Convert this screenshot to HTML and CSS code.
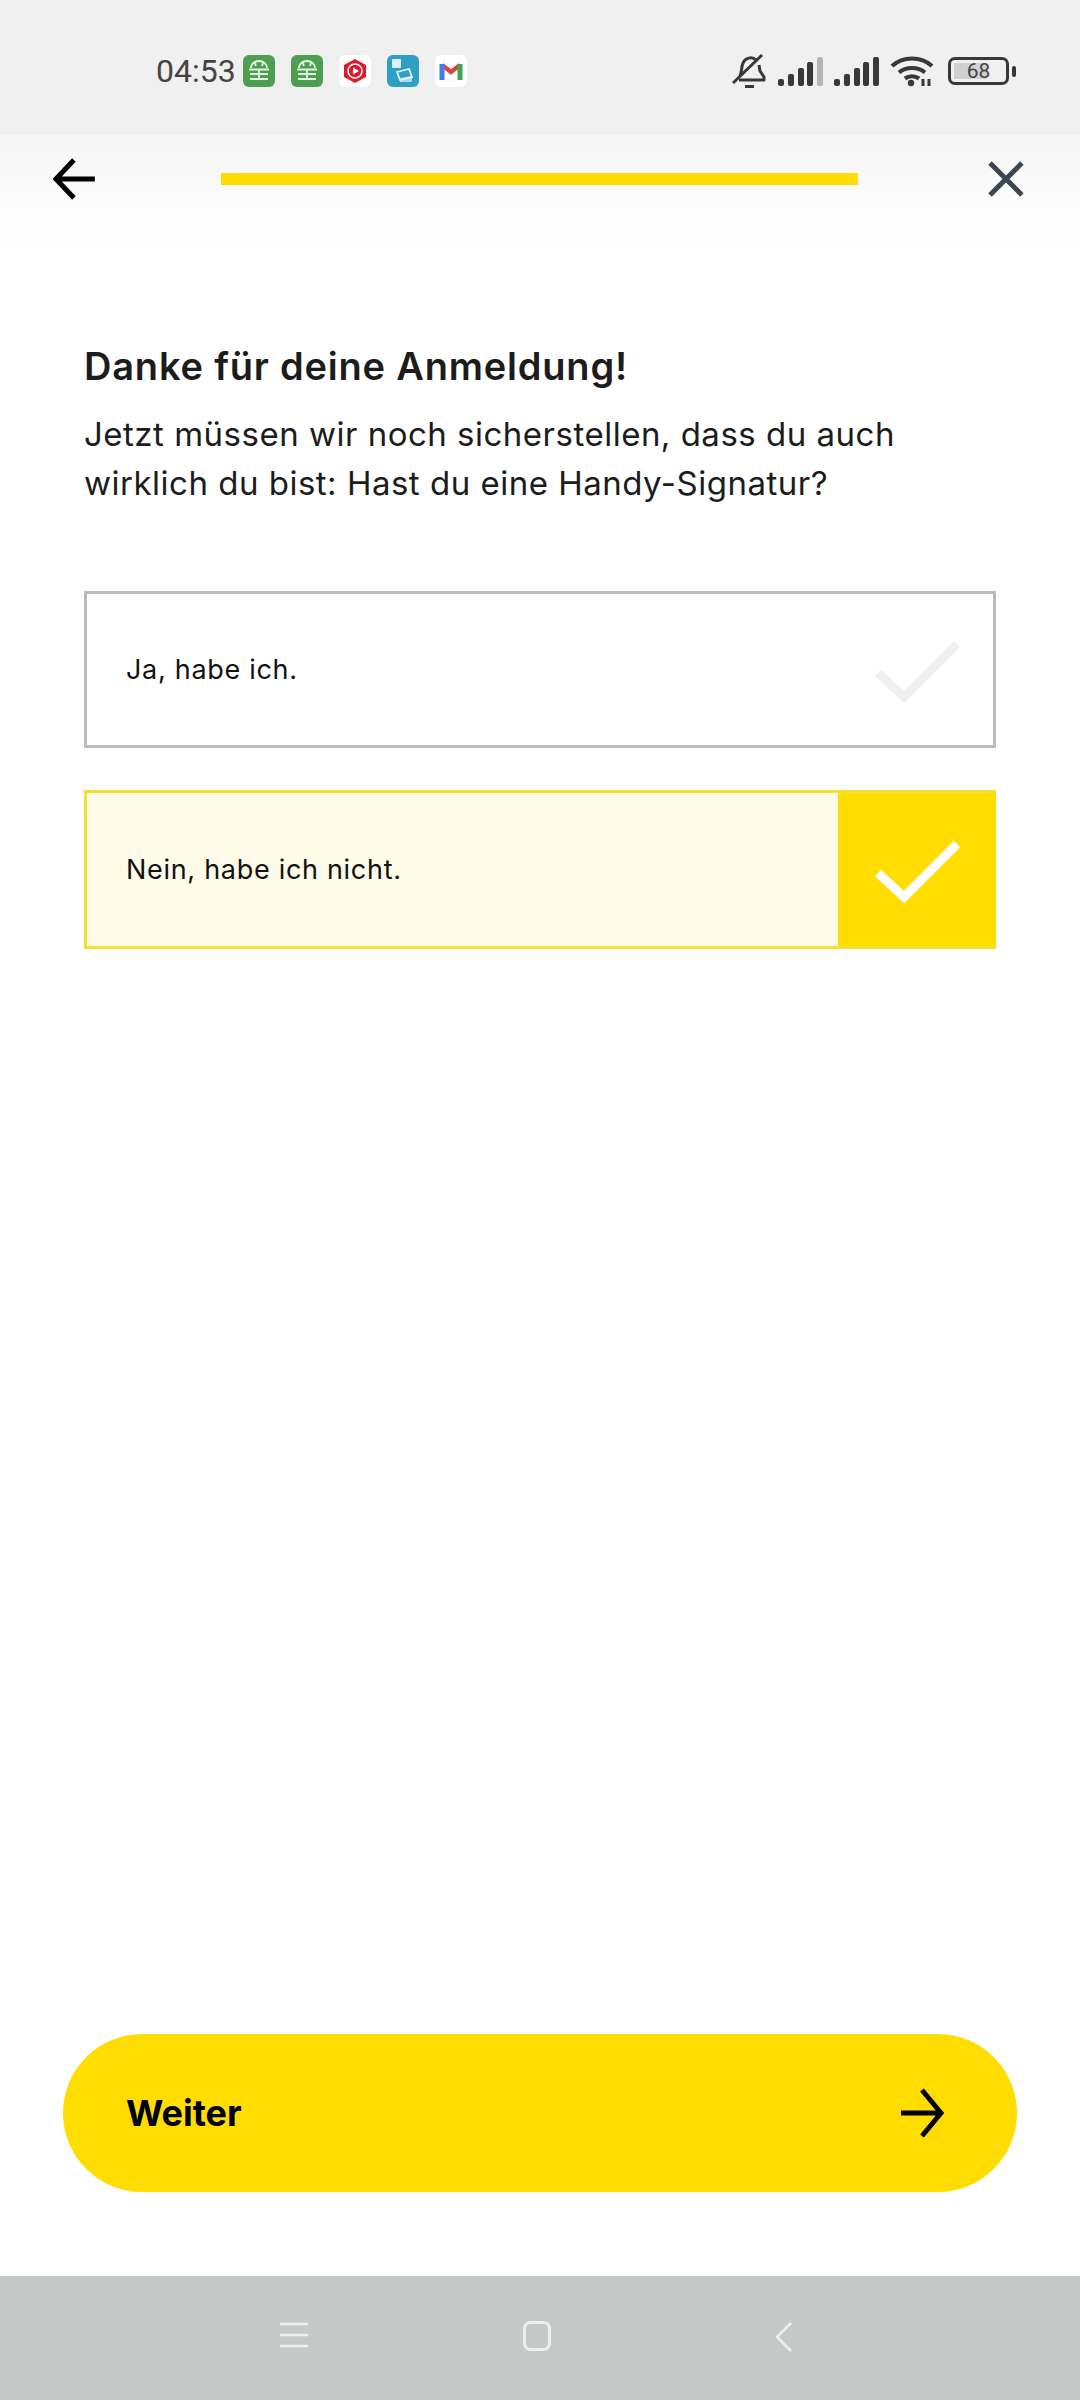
FILE: index.html
```html
<!DOCTYPE html>
<html lang="de">
<head>
    <meta charset="UTF-8">
    <meta name="viewport" content="width=device-width, initial-scale=1.0">
    <title>Anmeldung</title>
    <link rel="stylesheet" href="styles.css">
</head>
<body>
    <div class="statusbar">
        <span class="time">04:53</span>
        <div class="app-icons">
            <svg class="app" viewBox="0 0 32 32"><rect width="32" height="32" rx="6" fill="#4c9f50"/><path d="M8 13a8 7 0 0 1 16 0M6 14.500h20M7 19h18M7 24h18M16 15v9M12 8l1 3M20 8l-1 3" fill="none" stroke="#e4f2e4" stroke-width="1.800"/></svg>
            <svg class="app" viewBox="0 0 32 32"><rect width="32" height="32" rx="6" fill="#4c9f50"/><path d="M8 13a8 7 0 0 1 16 0M6 14.500h20M7 19h18M7 24h18M16 15v9M12 8l1 3M20 8l-1 3" fill="none" stroke="#e4f2e4" stroke-width="1.800"/></svg>
            <svg class="app" viewBox="0 0 32 32"><rect width="32" height="32" rx="6" fill="#fff"/><path d="M16 4l11 6v12l-11 6-11-6V10z" fill="#dd1a2a"/><circle cx="16" cy="16" r="7" fill="none" stroke="#fff" stroke-width="1.500"/><path d="M14 12.500l6 3.500-6 3.500z" fill="#fff"/></svg>
            <svg class="app" viewBox="0 0 32 32"><rect width="32" height="32" rx="6" fill="#2f9fc4"/><rect x="5" y="4" width="9" height="9" rx="1" fill="#d9f0f7"/><path d="M10 17l12-3 3 8-12 3z" fill="none" stroke="#e4f4f9" stroke-width="1.800"/><path d="M13 23l12-2v6H13z" fill="#e4f4f9" opacity=".7"/></svg>
            <svg class="app" viewBox="0 0 32 32"><rect width="32" height="32" rx="6" fill="#fff"/><path d="M7 10l9 7 9-7" fill="none" stroke="#dd4438" stroke-width="4.500"/><path d="M7 25V9" stroke="#3f7fe0" stroke-width="5"/><path d="M25 25V9" stroke="#3fa457" stroke-width="5"/></svg>
        </div>
        <div class="sys-icons">
            <svg class="bell" viewBox="0 0 34 36"><path d="M8 23c2-4 1-8 3-13 2-5 9-7 13-3M27 12l1 6 4 6v3H7" fill="none" stroke="#383838" stroke-width="3" stroke-linejoin="round"/><path d="M1 30L30 2" stroke="#383838" stroke-width="3"/><path d="M13 33.500h9" stroke="#383838" stroke-width="3"/></svg>
            <svg class="signal" viewBox="0 0 45 29"><rect x="0" y="22" width="6" height="7" rx="2" fill="#383838"/><rect x="10" y="17" width="6" height="12" rx="2" fill="#383838"/><rect x="20" y="11" width="6" height="18" rx="2" fill="#383838"/><rect x="29" y="5" width="6" height="24" rx="2" fill="#383838"/><rect x="39" y="0" width="6" height="29" rx="2" fill="#b5b5b5"/></svg>
            <svg class="signal" viewBox="0 0 45 29"><rect x="0" y="22" width="6" height="7" rx="2" fill="#383838"/><rect x="10" y="17" width="6" height="12" rx="2" fill="#383838"/><rect x="20" y="11" width="6" height="18" rx="2" fill="#383838"/><rect x="29" y="5" width="6" height="24" rx="2" fill="#383838"/><rect x="39" y="0" width="6" height="29" rx="2" fill="#383838"/></svg>
            <svg class="wifi" viewBox="0 0 44 32"><path d="M2 11c11-10 29-10 40 0M9 17.500c7-6 19-6 26 0M15 23.500c4-3 10-3 14 0" fill="none" stroke="#383838" stroke-width="4.200"/><circle cx="21" cy="28" r="3.200" fill="#383838"/><path d="M33 24v7M39 24v7" stroke="#383838" stroke-width="3"/></svg>
            <div class="battery">
                <div class="battery-body"><div class="battery-fill"></div><span class="battery-text">68</span></div>
                <div class="battery-nub"></div>
            </div>
        </div>
    </div>

    <div class="topbar">
        <svg class="back" viewBox="0 0 44 44"><path d="M42 22H4M21 3L3 22l18 19" fill="none" stroke="#000" stroke-width="5"/></svg>
        <div class="progress"></div>
        <svg class="close" viewBox="0 0 38 38"><path d="M3 3l32 32M35 3L3 35" fill="none" stroke="#3c4650" stroke-width="5"/></svg>
    </div>

    <div class="content">
        <h1>Danke für deine Anmeldung!</h1>
        <p class="intro">Jetzt müssen wir noch sicherstellen, dass du auch<br>wirklich du bist: Hast du eine Handy-Signatur?</p>

        <div class="option">
            <span>Ja, habe ich.</span>
            <div class="option-check">
                <svg viewBox="0 0 90 66"><path d="M5 36l26 24L84 7" fill="none" stroke="#f0f0f1" stroke-width="9"/></svg>
            </div>
        </div>
        <div class="option selected">
            <span>Nein, habe ich nicht.</span>
            <div class="option-check">
                <svg viewBox="0 0 90 66"><path d="M5 36l26 24L84 7" fill="none" stroke="#fff" stroke-width="9"/></svg>
            </div>
        </div>
    </div>

    <button class="next">
        <span>Weiter</span>
        <svg viewBox="0 0 44 50"><path d="M1 25h39M22 2l19 23-19 23" fill="none" stroke="#000" stroke-width="5"/></svg>
    </button>

    <div class="navbar">
        <svg class="nav-menu" viewBox="0 0 30 28"><path d="M1 3h28M1 14h28M1 25h28" stroke="#eef0ef" stroke-width="2.500"/></svg>
        <svg class="nav-home" viewBox="0 0 28 30"><rect x="1.500" y="1.500" width="25" height="27" rx="6" fill="none" stroke="#eef0ef" stroke-width="3"/></svg>
        <svg class="nav-back" viewBox="0 0 18 32"><path d="M16 2L2 16l14 14" fill="none" stroke="#eef0ef" stroke-width="2.500"/></svg>
    </div>
</body>
</html>
```

FILE: styles.css
```css
* {
    box-sizing: border-box;
}
body {
    font-family: 'Inter', 'Liberation Sans', sans-serif;
    background-color: #fff;
    color: #111;
    margin: 0;
    height: 2400px;
    display: flex;
    flex-direction: column;
    overflow: hidden;
}
.statusbar {
    height: 135px;
    flex: none;
    background-color: #f0f0f0;
    display: flex;
    align-items: center;
    padding: 7px 64px 0 156px;
    font-family: 'Roboto', sans-serif;
}
.time {
    font-size: 32px;
    color: #444;
    width: 87px;
}
.app-icons {
    display: flex;
    gap: 16px;
}
.app {
    width: 32px;
    height: 32px;
}
.sys-icons {
    display: flex;
    align-items: center;
    margin-left: auto;
}
.bell {
    width: 34px;
    height: 36px;
    margin-right: 12px;
}
.signal {
    width: 45px;
    height: 29px;
    margin-right: 11px;
}
.wifi {
    width: 44px;
    height: 32px;
    margin-right: 14px;
}
.battery {
    display: flex;
    align-items: center;
    gap: 3px;
}
.battery-body {
    width: 61px;
    height: 28px;
    border: 3px solid #383838;
    border-radius: 7px;
    position: relative;
    display: flex;
    align-items: center;
    justify-content: center;
}
.battery-fill {
    position: absolute;
    left: 3px;
    top: 3px;
    bottom: 3px;
    width: 33px;
    background-color: #d0d0d0;
}
.battery-text {
    position: relative;
    font-size: 21px;
    color: #444;
}
.battery-nub {
    width: 4px;
    height: 11px;
    border-radius: 2px;
    background-color: #383838;
}
.topbar {
    height: 115px;
    flex: none;
    background: linear-gradient(#f6f6f6, #fff);
    display: flex;
    align-items: flex-start;
    padding: 22px 55px 0 53px;
}
.back {
    width: 44px;
    height: 44px;
}
.progress {
    width: 639px;
    height: 12px;
    margin: 16px 129px 0 124px;
    background-color: #ffdd00;
}
.close {
    width: 38px;
    height: 38px;
    margin-top: 3px;
}
.content {
    flex: 1;
    padding: 92px 84px 0 84px;
}
h1 {
    font-size: 38px;
    font-weight: 600;
    line-height: 48px;
    letter-spacing: 0.8px;
    margin: 0 0 20px;
    color: #1c1c1c;
}
.intro {
    font-size: 33px;
    line-height: 49px;
    letter-spacing: 0.5px;
    margin: 0 0 83px;
    color: #1c1c1c;
}
.option {
    height: 157px;
    border: 3px solid #bcbcbc;
    margin-bottom: 42px;
    padding-left: 39px;
    display: flex;
    align-items: center;
    justify-content: space-between;
    font-size: 27px;
    letter-spacing: 0.7px;
    color: #111;
}
.option-check {
    width: 155px;
    height: 100%;
    display: flex;
    align-items: center;
    justify-content: center;
    padding-left: 5px;
}
.option-check svg {
    width: 90px;
    height: 66px;
}
.option.selected {
    height: 159px;
    border-color: #f4e030;
    background-color: #fefbe8;
}
.option.selected .option-check {
    background-color: #ffdd00;
    box-shadow: 3px 0 0 #ffdd00;
}
.next {
    flex: none;
    width: 954px;
    height: 158px;
    margin: 0 0 84px 63px;
    padding: 0 73px 0 63px;
    border: none;
    border-radius: 79px;
    background-color: #ffdd00;
    color: #000;
    display: flex;
    align-items: center;
    justify-content: space-between;
    font-family: inherit;
    font-size: 36px;
    font-weight: 700;
}
.next svg {
    width: 44px;
    height: 50px;
}
.navbar {
    height: 124px;
    flex: none;
    background-color: #c5cac8;
    display: flex;
    align-items: flex-start;
    padding: 45px 0 0 279px;
}
.nav-menu {
    width: 30px;
    height: 28px;
    margin-right: 214px;
}
.nav-home {
    width: 28px;
    height: 30px;
    margin-right: 224px;
}
.nav-back {
    width: 18px;
    height: 32px;
}
```
